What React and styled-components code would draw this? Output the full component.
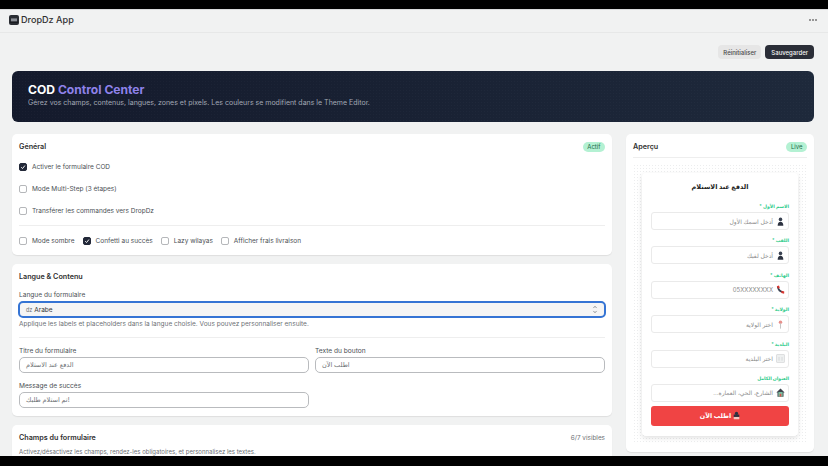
import React from "react";
import styled, { createGlobalStyle } from "styled-components";

const GlobalStyle = createGlobalStyle`
  html, body {
    margin: 0;
    padding: 0;
    width: 828px;
    height: 466px;
    overflow: hidden;
    background: #000;
    font-family: Inter, "DejaVu Sans", sans-serif;
  }
  * { box-sizing: border-box; }
`;

const Frame = styled.div`
  height: 466px;
  display: flex;
  flex-direction: column;
  background: #000;
  padding: 9px 0 10px;
`;

const Screen = styled.div`
  height: 447px;
  overflow: hidden;
  background-color: #f1f2f2;
  background-image: radial-gradient(#ecedec 0.5px, transparent 0.6px);
  background-size: 4px 4px;
  border-top: 1px solid #d9dadb;
`;

const AppBar = styled.header`
  height: 23px;
  padding: 0 9px 3px 9px;
  display: flex;
  align-items: center;
  justify-content: space-between;
  border-bottom: 1px solid #e7e8e8;
`;

const Brand = styled.div`
  display: flex;
  align-items: center;
  gap: 2px;
  font-size: 9.1px;
  font-weight: 500;
  color: #303030;
`;

const Dots = styled.span`
  display: flex;
  gap: 1px;
  margin-right: 2px;
  i {
    width: 2px;
    height: 2px;
    border-radius: 50%;
    background: #777;
  }
`;

const Actions = styled.div`
  height: 38px;
  padding: 12px 14px 0 0;
  display: flex;
  justify-content: flex-end;
  gap: 4px;
`;

const Button = styled.button`
  height: 14px;
  padding: 0 ${(p) => (p.$primary ? "6px" : "5px")};
  border: 0;
  border-radius: 4px;
  font-family: inherit;
  font-size: 6px;
  font-weight: 500;
  color: ${(p) => (p.$primary ? "#f5f5f5" : "#4a4a4a")};
  background: ${(p) => (p.$primary ? "#2b2e38" : "#e6e6e6")};
`;

const Hero = styled.section`
  margin: 0 14px 12px 12px;
  height: 51px;
  padding: 11px 16px 0;
  border-radius: 6px;
  background-color: #1a2233;
  background-image: radial-gradient(rgba(255, 255, 255, 0.025) 0.5px, transparent 0.6px),
    linear-gradient(90deg, #141a2c, #1e293b);
  background-size: 3px 3px, 100% 100%;
`;

const HeroTitle = styled.h1`
  margin: 0;
  font-size: 12.1px;
  line-height: 15px;
  font-weight: 700;
  color: #fff;
  span {
    color: #8f82ea;
  }
`;

const HeroText = styled.p`
  margin: 1px 0 0;
  font-size: 7px;
  line-height: 9px;
  color: #a2a8b4;
`;

const Columns = styled.div`
  margin: 0 14px 0 12px;
  display: grid;
  grid-template-columns: 600px 188px;
  column-gap: 14px;
  align-items: start;
`;

const Stack = styled.div`
  display: flex;
  flex-direction: column;
  gap: 9px;
`;

const Card = styled.section`
  background: #fff;
  border-radius: 5px;
  box-shadow: 0 1px 1px rgba(0, 0, 0, 0.08);
  padding: 8px 7px;
`;

const CardHead = styled.div`
  display: flex;
  align-items: center;
  justify-content: space-between;
  height: 9px;
  margin-bottom: ${(p) => p.$gap || 0}px;
`;

const CardTitle = styled.h2`
  margin: 0;
  font-size: 7.2px;
  font-weight: 600;
  color: #303030;
`;

const Badge = styled.span`
  height: 10px;
  padding: 0 4.5px;
  border-radius: 5px;
  background: #b4f1d3;
  color: #1c6b4a;
  font-size: 6px;
  line-height: 10px;
`;

const Muted = styled.span`
  font-size: 6.4px;
  color: #6d7175;
`;

const CheckColumn = styled.div`
  margin-top: 12px;
  display: flex;
  flex-direction: column;
  gap: 14px;
`;

const CheckRow = styled.div`
  margin-top: 10px;
  padding-top: 11px;
  padding-bottom: 2px;
  border-top: 1px solid #eeeeee;
  display: flex;
  gap: 8px;
`;

const CheckLabel = styled.label`
  display: flex;
  align-items: center;
  gap: 5px;
  height: 8px;
  font-size: 6.5px;
  color: #4b4f54;
`;

const Box = styled.span`
  width: 8px;
  height: 8px;
  border-radius: 2px;
  border: 0.6px solid ${(p) => (p.$on ? "#222838" : "#b5b7ba")};
  background: ${(p) => (p.$on ? "#222838" : "#fff")};
  display: flex;
  align-items: center;
  justify-content: center;
`;

const FieldLabel = styled.div`
  font-size: 6.6px;
  line-height: 9px;
  color: #4b4f54;
  margin-bottom: 1px;
`;

const Input = styled.div`
  height: 16px;
  padding: 0 6px;
  border: 0.7px solid #b9bbbe;
  border-radius: 5px;
  display: flex;
  align-items: center;
  font-size: 6.5px;
  color: #6d7175;
`;

const Select = styled(Input)`
  height: 17px;
  margin: 0 -1px;
  justify-content: space-between;
  background: #f5f5f5;
  border: 2px solid #3574d4;
  color: #33363a;
  small {
    font-size: 5.5px;
    color: #6d7175;
  }
`;

const Hint = styled.p`
  margin: ${(p) => p.$top || 2}px 0 0;
  font-size: ${(p) => p.$size || 6.5}px;
  line-height: 9px;
  color: #6d7175;
`;

const Divider = styled.hr`
  margin: 8px 0 9px;
  border: 0;
  border-top: 1px solid #eeeeee;
`;

const FormGrid = styled.div`
  display: grid;
  grid-template-columns: 1fr 1fr;
  gap: 9px 6px;
`;

const Preview = styled.div`
  margin-top: 6px;
  padding-top: 6px;
  border-top: 1px solid #eeeeee;
`;

const PreviewPad = styled.div`
  padding: 9px 9px 8px;
  background-image: radial-gradient(#ecedee 0.5px, transparent 0.6px);
  background-size: 3px 3px;
`;

const FormCard = styled.div`
  padding: 9px 9px 10px;
  border-radius: 4px;
  background: #fff;
  box-shadow: 0 2px 5px rgba(0, 0, 0, 0.12);
  direction: rtl;
`;

const FormTitle = styled.h3`
  margin: 0 0 10px;
  text-align: center;
  font-size: 6.5px;
  line-height: 11px;
  font-weight: 700;
  color: #222;
`;

const PreviewField = styled.div`
  margin-bottom: 7.4px;
  &:last-of-type {
    margin-bottom: 4px;
  }
`;

const PreviewLabel = styled.div`
  font-size: 4.6px;
  line-height: 7px;
  font-weight: 700;
  color: #2ecb8a;
  margin-bottom: 2px;
`;

const PreviewInput = styled.div`
  height: 18px;
  padding: 0 3px 0 4px;
  border: 1px solid #eaeaea;
  border-radius: 3px;
  display: flex;
  align-items: center;
  gap: 3px;
  font-size: 6px;
  color: #8b8b8b;
`;

const Submit = styled.button`
  width: 100%;
  height: 20px;
  border: 0;
  border-radius: 3px;
  background: #f04444;
  color: #fff;
  font-family: inherit;
  font-size: 6.4px;
  font-weight: 700;
  direction: rtl;
  display: flex;
  align-items: center;
  justify-content: center;
  gap: 2px;
`;

const Check = () => (
  <svg width="6" height="6" viewBox="0 0 10 10" fill="none" stroke="#fff" strokeWidth="1.6">
    <path d="M2 5.4 4.2 7.6 8.2 2.6" />
  </svg>
);

const CheckItem = ({ on, children }) => (
  <CheckLabel>
    <Box $on={on}>{on && <Check />}</Box>
    {children}
  </CheckLabel>
);

const BrandIcon = () => (
  <svg width="10" height="10" viewBox="0 0 10 10">
    <rect width="10" height="10" rx="2" fill="#2a2d33" />
    <rect x="2" y="3.4" width="6" height="3.2" fill="#8b8f96" />
    <rect x="1" y="6.6" width="8" height="1.2" fill="#16181c" />
  </svg>
);

const PersonIcon = () => (
  <svg width="9" height="9" viewBox="0 0 12 12">
    <circle cx="6" cy="3.2" r="2.4" fill="#3a4252" />
    <path d="M2.2 11.5C2.2 8 3.8 6.2 6 6.2S9.8 8 9.8 11.5Z" fill="#2c3240" />
  </svg>
);

const PhoneIcon = () => (
  <svg width="9" height="9" viewBox="0 0 12 12" fill="none">
    <path d="M2.5 2.5C3 6 6 9 9.5 9.5" stroke="#3a4252" strokeWidth="2.4" />
    <path d="M1 1.5 4 .8 5 3.8 3 5ZM7.5 7.5 11 8.5 10.8 11.5 7 10.5Z" fill="#d8352f" />
  </svg>
);

const PinIcon = () => (
  <svg width="9" height="9" viewBox="0 0 12 12">
    <circle cx="6" cy="3" r="2.3" fill="#e8908c" />
    <rect x="5.3" y="4.5" width="1.4" height="7" fill="#c4c4c4" />
  </svg>
);

const BuildingIcon = () => (
  <svg width="9" height="9" viewBox="0 0 12 12" fill="#eef0f0" stroke="#c4c6c8" strokeWidth="0.7">
    <rect x="1" y="1" width="10" height="10" />
    <path d="M4 4v5M8 4v5" />
  </svg>
);

const HouseIcon = () => (
  <svg width="9" height="9" viewBox="0 0 12 12">
    <path d="M6 .8 11.5 6H10v5.5H2V6H.5Z" fill="#3f444d" />
    <rect x="3.2" y="5.4" width="5.6" height="6.1" fill="#7cc8a8" />
    <rect x="4.8" y="7.6" width="2.4" height="3.9" fill="#d2554b" />
  </svg>
);

const BagIcon = () => (
  <svg width="7" height="9" viewBox="0 0 10 12">
    <circle cx="5" cy="3" r="2.4" fill="#2c3240" />
    <rect x="1" y="4.6" width="8" height="3.4" fill="#2c3240" />
    <rect x="1" y="8" width="8" height="3.5" rx="1" fill="#f2c9c0" />
  </svg>
);

const SelectArrows = () => (
  <svg width="6" height="9" viewBox="0 0 6 10" fill="none" stroke="#6d7175" strokeWidth="0.8">
    <path d="M1.2 3.4 3 1.4l1.8 2M1.2 6.6 3 8.6l1.8-2" />
  </svg>
);

const previewFields = [
  { label: "الاسم الأول *", placeholder: "أدخل اسمك الأول", icon: <PersonIcon /> },
  { label: "اللقب *", placeholder: "أدخل لقبك", icon: <PersonIcon /> },
  { label: "الهاتف *", placeholder: "05XXXXXXXX", icon: <PhoneIcon /> },
  { label: "الولاية *", placeholder: "اختر الولاية", icon: <PinIcon /> },
  { label: "البلدية *", placeholder: "اختر البلدية", icon: <BuildingIcon /> },
  { label: "العنوان الكامل", placeholder: "الشارع، الحي، العمارة...", icon: <HouseIcon /> },
];

export default function App() {
  return (
    <Frame>
      <GlobalStyle />
      <Screen>
        <AppBar>
          <Brand>
            <BrandIcon />
            DropDz App
          </Brand>
          <Dots>
            <i />
            <i />
            <i />
          </Dots>
        </AppBar>
        <Actions>
          <Button>Réinitialiser</Button>
          <Button $primary>Sauvegarder</Button>
        </Actions>
        <Hero>
          <HeroTitle>
            COD <span>Control Center</span>
          </HeroTitle>
          <HeroText>
            Gérez vos champs, contenus, langues, zones et pixels. Les couleurs se modifient dans le Theme Editor.
          </HeroText>
        </Hero>
        <Columns>
          <Stack>
            <Card>
              <CardHead>
                <CardTitle>Général</CardTitle>
                <Badge>Actif</Badge>
              </CardHead>
              <CheckColumn>
                <CheckItem on>Activer le formulaire COD</CheckItem>
                <CheckItem>Mode Multi-Step (3 étapes)</CheckItem>
                <CheckItem>Transférer les commandes vers DropDz</CheckItem>
              </CheckColumn>
              <CheckRow>
                <CheckItem>Mode sombre</CheckItem>
                <CheckItem on>Confetti au succès</CheckItem>
                <CheckItem>Lazy wilayas</CheckItem>
                <CheckItem>Afficher frais livraison</CheckItem>
              </CheckRow>
            </Card>
            <Card>
              <CardHead $gap={10}>
                <CardTitle>Langue &amp; Contenu</CardTitle>
              </CardHead>
              <FieldLabel>Langue du formulaire</FieldLabel>
              <Select>
                <span>
                  <small>dz</small> Arabe
                </span>
                <SelectArrows />
              </Select>
              <Hint>Applique les labels et placeholders dans la langue choisie. Vous pouvez personnaliser ensuite.</Hint>
              <Divider />
              <FormGrid>
                <div>
                  <FieldLabel>Titre du formulaire</FieldLabel>
                  <Input>الدفع عند الاستلام</Input>
                </div>
                <div>
                  <FieldLabel>Texte du bouton</FieldLabel>
                  <Input>اطلب الآن</Input>
                </div>
                <div>
                  <FieldLabel>Message de succès</FieldLabel>
                  <Input>تم استلام طلبك!</Input>
                </div>
              </FormGrid>
            </Card>
            <Card>
              <CardHead>
                <CardTitle>Champs du formulaire</CardTitle>
                <Muted>6/7 visibles</Muted>
              </CardHead>
              <Hint $top={5} $size={6}>
                Activez/désactivez les champs, rendez-les obligatoires, et personnalisez les textes.
              </Hint>
            </Card>
          </Stack>
          <Card>
            <CardHead>
              <CardTitle>Aperçu</CardTitle>
              <Badge>Live</Badge>
            </CardHead>
            <Preview>
              <PreviewPad>
                <FormCard>
                  <FormTitle>الدفع عند الاستلام</FormTitle>
                  {previewFields.map((field) => (
                    <PreviewField key={field.label}>
                      <PreviewLabel>{field.label}</PreviewLabel>
                      <PreviewInput>
                        {field.icon}
                        <span>{field.placeholder}</span>
                      </PreviewInput>
                    </PreviewField>
                  ))}
                  <Submit>
                    <BagIcon />
                    اطلب الآن
                  </Submit>
                </FormCard>
              </PreviewPad>
            </Preview>
          </Card>
        </Columns>
      </Screen>
    </Frame>
  );
}
